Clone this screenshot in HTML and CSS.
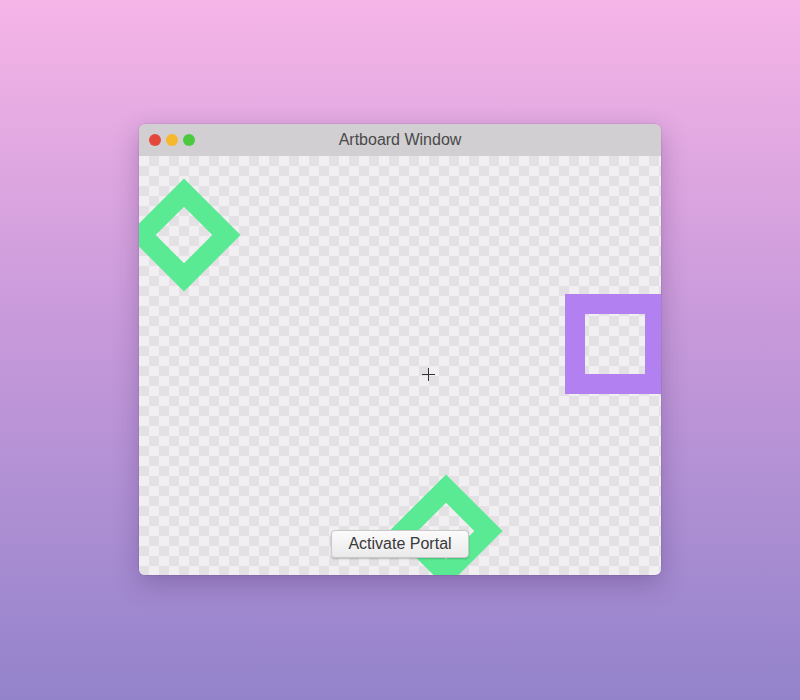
FILE: index.html
```html
<!DOCTYPE html>
<html lang="en">
<head>
<meta charset="utf-8">
<title>Artboard Window</title>
<link rel="stylesheet" href="styles.css">
</head>
<body>
  <div class="window">
    <div class="titlebar">
      <div class="lights">
        <span class="light red"></span>
        <span class="light yellow"></span>
        <span class="light green"></span>
      </div>
      <div class="title">Artboard Window</div>
    </div>
    <div class="canvas">
      <div class="diamond diamond-top"></div>
      <div class="square"></div>
      <div class="diamond diamond-bottom"></div>
      <div class="crosshair"></div>
      <button class="portal-btn">Activate Portal</button>
    </div>
  </div>
</body>
</html>
```
FILE: styles.css
```css
html, body {
  margin: 0;
  padding: 0;
  height: 100%;
}
body {
  box-sizing: border-box;
  padding-bottom: 1px;
  background: linear-gradient(to bottom, #f6b5e7 0%, #c99adb 45%, #9383cb 100%);
  display: flex;
  align-items: center;
  justify-content: center;
  font-family: "Liberation Sans", Arial, sans-serif;
}
.window {
  width: 522px;
  height: 451px;
  border-radius: 6px;
  overflow: hidden;
  display: flex;
  flex-direction: column;
  box-shadow: 0 8px 26px rgba(60, 30, 90, 0.3), 0 0 0 0.5px rgba(0,0,0,0.12);
}
.titlebar {
  height: 32px;
  flex: none;
  background: #d1cfd1;
  position: relative;
  display: flex;
  align-items: center;
}
.lights {
  display: flex;
  gap: 5px;
  padding-left: 10px;
}
.light {
  width: 12px;
  height: 12px;
  border-radius: 50%;
  display: block;
}
.red { background: #e4483b; }
.yellow { background: #f6b82d; }
.green { background: #4cc93f; }
.title {
  position: absolute;
  left: 0;
  right: 0;
  text-align: center;
  font-size: 16px;
  color: #4a494b;
}
.canvas {
  flex: 1;
  position: relative;
  overflow: hidden;
  background-color: #f1eff1;
  background-image:
    linear-gradient(45deg, #e3e1e3 25%, transparent 25%, transparent 75%, #e3e1e3 75%),
    linear-gradient(45deg, #e3e1e3 25%, transparent 25%, transparent 75%, #e3e1e3 75%);
  background-size: 20px 20px;
  background-position: 0 0, 10px 10px;
}
.diamond {
  position: absolute;
  width: 80px;
  height: 80px;
  box-sizing: border-box;
  border: 20px solid #5aea94;
  transform: rotate(45deg);
}
.diamond-top {
  left: 5px;
  top: 39px;
}
.diamond-bottom {
  left: 267px;
  top: 335px;
}
.square {
  position: absolute;
  left: 426px;
  top: 138px;
  width: 100px;
  height: 100px;
  box-sizing: border-box;
  border: 20px solid #b380f1;
}
.crosshair {
  position: absolute;
  left: 283px;
  top: 212px;
  width: 13px;
  height: 13px;
}
.crosshair::before,
.crosshair::after {
  content: "";
  position: absolute;
  background: #333;
}
.crosshair::before {
  left: 0;
  right: 0;
  top: 6px;
  height: 1px;
}
.crosshair::after {
  top: 0;
  bottom: 0;
  left: 6px;
  width: 1px;
}
.portal-btn {
  position: absolute;
  left: 50%;
  bottom: 17px;
  transform: translateX(-50%);
  width: 138px;
  height: 28px;
  padding: 0;
  border: 1px solid #c9c7c9;
  border-radius: 4px;
  background: linear-gradient(to bottom, #fbfbfb, #ebeaeb);
  box-shadow: 0 1px 2px rgba(0,0,0,0.22);
  font-family: "Liberation Sans", Arial, sans-serif;
  font-size: 16px;
  color: #3a393b;
}
```
